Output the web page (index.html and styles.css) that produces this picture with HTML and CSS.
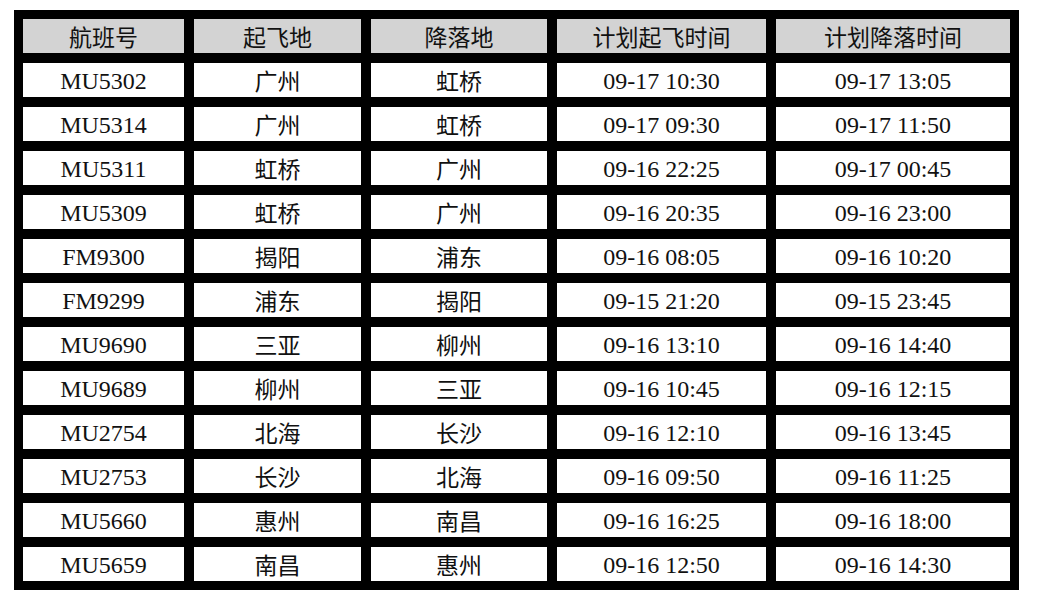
FILE: index.html
```html
<!DOCTYPE html>
<html lang="zh">
<head>
<meta charset="utf-8">
<link rel="stylesheet" href="styles.css">
</head>
<body>
<div class="board">
  <div class="cell head">航班号</div><div class="cell head">起飞地</div><div class="cell head">降落地</div><div class="cell head">计划起飞时间</div><div class="cell head">计划降落时间</div>
  <div class="cell">MU5302</div><div class="cell cjk">广州</div><div class="cell cjk">虹桥</div><div class="cell">09-17 10:30</div><div class="cell">09-17 13:05</div>
  <div class="cell">MU5314</div><div class="cell cjk">广州</div><div class="cell cjk">虹桥</div><div class="cell">09-17 09:30</div><div class="cell">09-17 11:50</div>
  <div class="cell">MU5311</div><div class="cell cjk">虹桥</div><div class="cell cjk">广州</div><div class="cell">09-16 22:25</div><div class="cell">09-17 00:45</div>
  <div class="cell">MU5309</div><div class="cell cjk">虹桥</div><div class="cell cjk">广州</div><div class="cell">09-16 20:35</div><div class="cell">09-16 23:00</div>
  <div class="cell">FM9300</div><div class="cell cjk">揭阳</div><div class="cell cjk">浦东</div><div class="cell">09-16 08:05</div><div class="cell">09-16 10:20</div>
  <div class="cell">FM9299</div><div class="cell cjk">浦东</div><div class="cell cjk">揭阳</div><div class="cell">09-15 21:20</div><div class="cell">09-15 23:45</div>
  <div class="cell">MU9690</div><div class="cell cjk">三亚</div><div class="cell cjk">柳州</div><div class="cell">09-16 13:10</div><div class="cell">09-16 14:40</div>
  <div class="cell">MU9689</div><div class="cell cjk">柳州</div><div class="cell cjk">三亚</div><div class="cell">09-16 10:45</div><div class="cell">09-16 12:15</div>
  <div class="cell">MU2754</div><div class="cell cjk">北海</div><div class="cell cjk">长沙</div><div class="cell">09-16 12:10</div><div class="cell">09-16 13:45</div>
  <div class="cell">MU2753</div><div class="cell cjk">长沙</div><div class="cell cjk">北海</div><div class="cell">09-16 09:50</div><div class="cell">09-16 11:25</div>
  <div class="cell">MU5660</div><div class="cell cjk">惠州</div><div class="cell cjk">南昌</div><div class="cell">09-16 16:25</div><div class="cell">09-16 18:00</div>
  <div class="cell">MU5659</div><div class="cell cjk">南昌</div><div class="cell cjk">惠州</div><div class="cell">09-16 12:50</div><div class="cell">09-16 14:30</div>
</div>
</body>
</html>
```
FILE: styles.css
```css
html, body {
  margin: 0;
  padding: 0;
  background: #ffffff;
}
.board {
  margin: 10px 0 0 14px;
  width: max-content;
  display: grid;
  grid-template-columns: 161px 167px 176px 209px 234px;
  grid-auto-rows: 34px;
  gap: 10px;
  padding: 9px;
  background: #000000;
}
.cell {
  background: #ffffff;
  color: #111111;
  display: flex;
  align-items: center;
  justify-content: center;
  font-family: "Liberation Serif", "Noto Sans CJK SC", serif;
  font-size: 24px;
  line-height: 1;
  padding-top: 2px;
  box-sizing: border-box;
}
.cjk {
  font-family: "Noto Sans CJK SC", sans-serif;
  font-size: 23px;
  padding-top: 0;
}
.head {
  background: #d3d3d3;
  font-family: "Noto Sans CJK SC", sans-serif;
  font-size: 23px;
  padding-top: 0;
}
```
